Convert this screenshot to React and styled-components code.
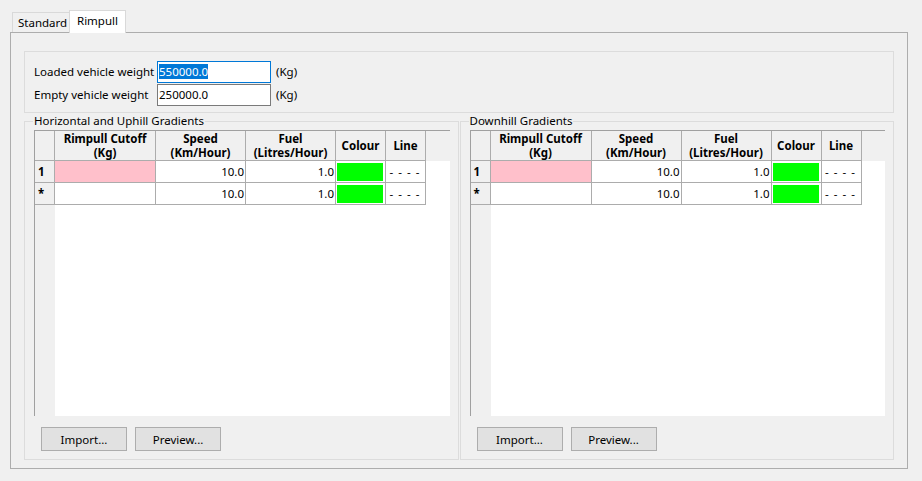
import React from 'react';
import styled, { createGlobalStyle } from 'styled-components';

const GlobalStyle = createGlobalStyle`
  html, body {
    margin: 0;
    padding: 0;
    background: #f0f0f0;
  }
  body {
    width: 922px;
    height: 481px;
    overflow: hidden;
    font-family: "Noto Sans", "Open Sans", sans-serif;
    font-size: 11.5px;
    color: #000;
  }
`;

const Window = styled.div`
  padding: 10px 14px 0 10px;
  width: 898px;
`;

const TabStrip = styled.div`
  display: flex;
  align-items: flex-start;
  height: 23px;
  padding-left: 2px;
  margin-bottom: -1px;
  position: relative;
  z-index: 1;
`;

const Tab = styled.div`
  box-sizing: border-box;
  height: ${(p) => (p.$active ? '23px' : '20px')};
  margin-top: ${(p) => (p.$active ? '0' : '2px')};
  width: 57px;
  padding-left: ${(p) => (p.$active ? '7px' : '5px')};
  border: 1px solid #d9d9d9;
  border-bottom: none;
  border-right: ${(p) => (p.$active ? '1px solid #d9d9d9' : 'none')};
  background: ${(p) => (p.$active ? '#fff' : '#f0f0f0')};
  line-height: ${(p) => (p.$active ? '20px' : '19px')};
  white-space: nowrap;
`;

const Panel = styled.div`
  box-sizing: border-box;
  height: 437px;
  border: 1px solid #adadad;
  padding: 18px 13px 8px 13px;
  display: flex;
  flex-direction: column;
`;

const WeightBox = styled.div`
  box-sizing: border-box;
  height: 62px;
  border: 1px solid #dcdcdc;
  padding: 9px 9px;
  display: flex;
  flex-direction: column;
  gap: 1px;
`;

const FieldRow = styled.div`
  display: flex;
  align-items: center;
  height: 22px;
`;

const FieldLabel = styled.span`
  width: 123px;
  white-space: nowrap;
  padding-bottom: 2px;
`;

const Input = styled.div`
  box-sizing: border-box;
  width: 114px;
  height: 22px;
  border: 1px solid ${(p) => (p.$focused ? '#0078d7' : '#7a7a7a')};
  background: #fff;
  padding: 0 0 1px 1px;
  display: flex;
  align-items: center;
`;

const Selected = styled.span`
  background: #0078d7;
  color: #fff;
  line-height: 15px;
`;

const Unit = styled.span`
  margin-left: 5px;
  padding-bottom: 2px;
`;

const GradientRow = styled.div`
  flex: 1;
  display: flex;
  gap: 1px;
  margin-top: 1px;
`;

const GroupBox = styled.fieldset`
  flex: 1;
  min-width: 0;
  margin: 0;
  border: 1px solid #dcdcdc;
  padding: 0 8px 8px 9px;
  display: flex;
  flex-direction: column;
`;

const Legend = styled.legend`
  padding: 0 1px;
  margin-left: -1px;
  line-height: 14px;
`;

const Grid = styled.div`
  flex: 1;
  margin-top: 2px;
  display: grid;
  grid-template-columns: 20px 101px 90px 90px 50px 40px 1fr;
  grid-template-rows: 30px 22px 22px 1fr;
  border-left: 1px solid #a0a0a0;
  border-top: 1px solid #a0a0a0;
  background: #fff;
`;

const HeadCell = styled.div`
  background: #f0f0f0;
  border-right: ${(p) => (p.$plain ? 'none' : '1px solid #acacac')};
  border-bottom: ${(p) => (p.$plain ? 'none' : '1px solid #acacac')};
  font-weight: bold;
  display: flex;
  flex-direction: column;
  align-items: center;
  justify-content: center;
  text-align: center;
  line-height: 14px;
`;

const RowHead = styled.div`
  background: #f0f0f0;
  border-right: ${(p) => (p.$plain ? 'none' : '1px solid #acacac')};
  border-bottom: ${(p) => (p.$plain ? 'none' : '1px solid #acacac')};
  font-weight: bold;
  padding-left: 3px;
  display: flex;
  align-items: center;
`;

const Cell = styled.div`
  background: ${(p) => p.$bg || '#fff'};
  border-right: 1px solid #acacac;
  border-bottom: 1px solid #acacac;
  display: flex;
  align-items: center;
  justify-content: ${(p) => p.$align || 'flex-end'};
  padding: ${(p) => (p.$pad ? '2px 2px 1px 1px' : '0 1px 0 0')};
  letter-spacing: ${(p) => (p.$spaced ? '1px' : 'normal')};
  white-space: nowrap;
`;

const Swatch = styled.div`
  flex: 1;
  align-self: stretch;
  background: #00ff00;
`;

const Blank = styled.div`
  background: ${(p) => p.$bg || '#fff'};
  grid-column: ${(p) => p.$span || 'auto'};
`;

const ButtonRow = styled.div`
  display: flex;
  gap: 8px;
  padding-left: 7px;
  margin-top: 11px;
`;

const Button = styled.button`
  box-sizing: border-box;
  width: 86px;
  height: 24px;
  border: 1px solid #adadad;
  background: #e1e1e1;
  font-family: inherit;
  font-size: 11.5px;
  color: #000;
  padding: 0;
`;

const rows = [
  { head: '1', cutoff: true },
  { head: '*', cutoff: false },
];

const GradientGrid = ({ title }) => (
  <GroupBox>
    <Legend>{title}</Legend>
    <Grid>
      <HeadCell />
      <HeadCell>
        <span>Rimpull Cutoff</span>
        <span>(Kg)</span>
      </HeadCell>
      <HeadCell>
        <span>Speed</span>
        <span>(Km/Hour)</span>
      </HeadCell>
      <HeadCell>
        <span>Fuel</span>
        <span>(Litres/Hour)</span>
      </HeadCell>
      <HeadCell>Colour</HeadCell>
      <HeadCell>Line</HeadCell>
      <HeadCell $plain />
      {rows.map((r) => (
        <React.Fragment key={r.head}>
          <RowHead>{r.head}</RowHead>
          <Cell $bg={r.cutoff ? '#ffc0cb' : '#fff'} />
          <Cell>10.0</Cell>
          <Cell>1.0</Cell>
          <Cell $pad>
            <Swatch />
          </Cell>
          <Cell $align="center" $spaced>- - - -</Cell>
          <Blank />
        </React.Fragment>
      ))}
      <RowHead $plain />
      <Blank $span="2 / -1" />
    </Grid>
    <ButtonRow>
      <Button>Import...</Button>
      <Button>Preview...</Button>
    </ButtonRow>
  </GroupBox>
);

const App = () => (
  <>
    <GlobalStyle />
    <Window>
      <TabStrip>
        <Tab>Standard</Tab>
        <Tab $active>Rimpull</Tab>
      </TabStrip>
      <Panel>
        <WeightBox>
          <FieldRow>
            <FieldLabel>Loaded vehicle weight</FieldLabel>
            <Input $focused>
              <Selected>550000.0</Selected>
            </Input>
            <Unit>(Kg)</Unit>
          </FieldRow>
          <FieldRow>
            <FieldLabel>Empty vehicle weight</FieldLabel>
            <Input>250000.0</Input>
            <Unit>(Kg)</Unit>
          </FieldRow>
        </WeightBox>
        <GradientRow>
          <GradientGrid title="Horizontal and Uphill Gradients" />
          <GradientGrid title="Downhill Gradients" />
        </GradientRow>
      </Panel>
    </Window>
  </>
);

export default App;
